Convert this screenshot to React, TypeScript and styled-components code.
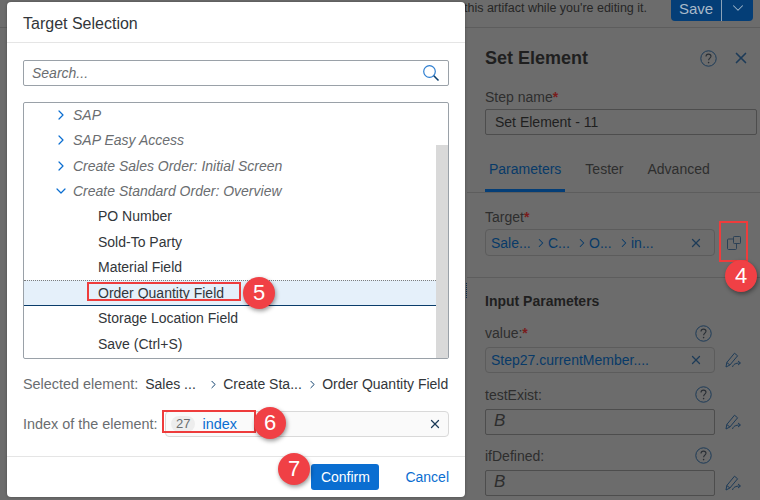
import React from 'react';
import styled, { createGlobalStyle } from 'styled-components';
import { ChevronRight, ChevronDown, X } from 'lucide-react';

const GlobalStyle = createGlobalStyle`
  html, body {
    margin: 0;
    padding: 0;
    background: #6c6c6c;
    font-family: "Liberation Sans", Arial, sans-serif;
  }
`;

const ICON_DARK = '#1d3b58';

const SearchIcon = () => (
  <svg width="18" height="18" viewBox="0 0 18 18" fill="none">
    <circle cx="7.5" cy="7.5" r="5.8" stroke="#2f7fd1" strokeWidth="1.2" />
    <path d="M11.8 11.8L16.5 16.5" stroke="#0a3d6b" strokeWidth="1.6" />
  </svg>
);

const HelpIcon = () => (
  <svg width="17" height="17" viewBox="0 0 17 17" fill="none">
    <circle cx="8.5" cy="8.5" r="7.7" stroke={ICON_DARK} strokeWidth="1" />
    <path
      d="M6 6.6C6 5 7.1 4.1 8.5 4.1C10 4.1 11 5 11 6.3C11 8 8.6 8.2 8.6 10.3"
      stroke="#2a2f35"
      strokeWidth="1.1"
    />
    <circle cx="8.6" cy="12.6" r="0.8" fill="#2a2f35" />
  </svg>
);

const CopyIcon = () => (
  <CopyGlyph width="14" height="14" viewBox="0 0 14 14" fill="none" stroke="#2c4156" strokeWidth="1">
    <rect x="6.5" y="0.5" width="7" height="7" rx="0.8" />
    <path d="M6.5 3H1.5C0.9 3 0.5 3.4 0.5 4V12.5C0.5 13.1 0.9 13.5 1.5 13.5H8.5C9.1 13.5 9.5 13.1 9.5 12.5V7.5" />
  </CopyGlyph>
);

const EditIcon = () => (
  <svg width="16" height="16" viewBox="0 0 16 16" fill="none" stroke="#1d3b58" strokeWidth="1">
    <path d="M1 15L1.8 10.5L9.5 1.2L12.6 3.8L4.9 13Z" />
    <path d="M1.8 10.5L4.9 13" />
    <path d="M7.5 15C8.2 12.4 10.5 11 15 11M13 9L15.5 11L13 13" />
  </svg>
);

const ClearIcon = () => <X size={14} color={ICON_DARK} strokeWidth={2.2} />;

const treeRows = [
  { label: 'SAP', kind: 'closed' },
  { label: 'SAP Easy Access', kind: 'closed' },
  { label: 'Create Sales Order: Initial Screen', kind: 'closed' },
  { label: 'Create Standard Order: Overview', kind: 'open' },
  { label: 'PO Number', kind: 'leaf' },
  { label: 'Sold-To Party', kind: 'leaf' },
  { label: 'Material Field', kind: 'leaf' },
  { label: 'Order Quantity Field', kind: 'selected' },
  { label: 'Storage Location Field', kind: 'leaf' },
  { label: 'Save (Ctrl+S)', kind: 'leaf' },
];

const App = () => {
  return (
    <Page>
      <GlobalStyle />
      <TopBar>
        <Notice>this artifact while you're editing it.</Notice>
        <SaveGroup>
          <SaveButton>Save</SaveButton>
          <SaveArrow>
            <ChevronDown size={18} color="#9db4c8" strokeWidth={1.4} />
          </SaveArrow>
        </SaveGroup>
      </TopBar>

      <Main>
        <SidePanel>
          <TitleRow>
            <PanelTitle>Set Element</PanelTitle>
            <HelpIcon />
            <X size={18} color={ICON_DARK} strokeWidth={2.2} />
          </TitleRow>
          <FieldLabel>
            Step name<Star>*</Star>
          </FieldLabel>
          <StepInput>Set Element - 11</StepInput>
          <Tabs>
            <Tab $active>Parameters</Tab>
            <Tab>Tester</Tab>
            <Tab>Advanced</Tab>
          </Tabs>
          <TargetBlock>
            <FieldLabel>
              Target<Star>*</Star>
            </FieldLabel>
            <FieldRow>
              <TokenField $tall>
                <TokenPath>
                  <TokenPart $width={43}>Sale...</TokenPart>
                  <ChevronRight size={14} color="#083a68" strokeWidth={1.8} />
                  <TokenPart $width={27}>C...</TokenPart>
                  <ChevronRight size={14} color="#083a68" strokeWidth={1.8} />
                  <TokenPart $width={28}>O...</TokenPart>
                  <ChevronRight size={14} color="#083a68" strokeWidth={1.8} />
                  <TokenPart>in...</TokenPart>
                </TokenPath>
                <ClearIcon />
              </TokenField>
              <SideIcon>
                <CopyIcon />
              </SideIcon>
            </FieldRow>
          </TargetBlock>
          <Parameters>
            <SectionTitle>Input Parameters</SectionTitle>
            <ParamHead>
              <FieldLabelInline>
                value:<Star>*</Star>
              </FieldLabelInline>
              <HelpIcon />
            </ParamHead>
            <FieldRow>
              <TokenField>
                <TokenPart>Step27.currentMember....</TokenPart>
                <ClearIcon />
              </TokenField>
              <SideIcon>
                <EditIcon />
              </SideIcon>
            </FieldRow>
            <ParamHead>
              <FieldLabelInline>testExist:</FieldLabelInline>
              <HelpIcon />
            </ParamHead>
            <FieldRow>
              <BoolField>B</BoolField>
              <SideIcon>
                <EditIcon />
              </SideIcon>
            </FieldRow>
            <ParamHead>
              <FieldLabelInline>ifDefined:</FieldLabelInline>
              <HelpIcon />
            </ParamHead>
            <FieldRow>
              <BoolField>B</BoolField>
              <SideIcon>
                <EditIcon />
              </SideIcon>
            </FieldRow>
          </Parameters>
        </SidePanel>
      </Main>

      <Grip />

      <Dialog>
        <DialogHeader>Target Selection</DialogHeader>
        <DialogBody>
          <SearchBox>
            <SearchText>Search...</SearchText>
            <SearchIcon />
          </SearchBox>
          <Tree>
            <TreeList>
              {treeRows.map((row) => (
                <TreeRow key={row.label} $selected={row.kind === 'selected'}>
                  {row.kind === 'closed' && <ChevronRight size={16} color="#0a6ed1" strokeWidth={1.8} />}
                  {row.kind === 'open' && <ChevronDown size={16} color="#0a6ed1" strokeWidth={1.8} />}
                  <TreeLabel $group={row.kind === 'closed' || row.kind === 'open'}>{row.label}</TreeLabel>
                </TreeRow>
              ))}
            </TreeList>
            <ScrollTrack>
              <ScrollThumb />
            </ScrollTrack>
          </Tree>
          <PathRow>
            <MutedLabel>Selected element:</MutedLabel>
            <PathText $width={62}>Sales ...</PathText>
            <ChevronRight size={13} color="#0a3d6b" strokeWidth={1.8} />
            <PathText $width={83}>Create Sta...</PathText>
            <ChevronRight size={13} color="#0a3d6b" strokeWidth={1.8} />
            <PathText>Order Quantity Field</PathText>
          </PathRow>
          <IndexRow>
            <MutedLabel>Index of the element:</MutedLabel>
            <IndexField>
              <IndexTag>
                <IndexNum>27</IndexNum>
                <IndexName>index</IndexName>
              </IndexTag>
              <ClearIcon />
            </IndexField>
          </IndexRow>
        </DialogBody>
        <DialogFooter>
          <ConfirmButton>Confirm</ConfirmButton>
          <CancelButton>Cancel</CancelButton>
        </DialogFooter>
      </Dialog>

      <Callout $x={719} $y={221} $w={29} $h={41} />
      <Callout $x={87} $y={282} $w={154} $h={19} />
      <Callout $x={162} $y={410} $w={94} $h={23} />
      <Badge $cx={741} $cy={276}>4</Badge>
      <Badge $cx={259} $cy={293}>5</Badge>
      <Badge $cx={270} $cy={423}>6</Badge>
      <Badge $cx={294} $cy={469}>7</Badge>
    </Page>
  );
};

export default App;

const Page = styled.div`
  position: relative;
  width: 760px;
  height: 500px;
  overflow: hidden;
  background: #6c6c6c;
  display: flex;
  flex-direction: column;
`;

const TopBar = styled.div`
  height: 27px;
  flex: none;
  display: flex;
  justify-content: flex-end;
  align-items: center;
  gap: 24px;
  border-bottom: 1px solid #5d5d5d;
`;

const Notice = styled.span`
  font-size: 12.5px;
  color: #262626;
  margin-top: -12px;
`;

const SaveGroup = styled.div`
  display: flex;
  height: 27px;
  margin-top: -12px;
  margin-right: 7px;
  border-radius: 4px;
  overflow: hidden;
  background: #043e77;
`;

const SaveButton = styled.div`
  width: 50px;
  font-size: 15px;
  line-height: 27px;
  padding-top: 1px;
  text-align: center;
  color: #a8b9c9;
  border-right: 1px solid #8ba2b8;
`;

const SaveArrow = styled.div`
  width: 31px;
  display: flex;
  align-items: center;
  justify-content: center;
`;

const Main = styled.div`
  flex: 1;
  display: flex;
  justify-content: flex-end;
`;

const SidePanel = styled.div`
  width: 293px;
  box-sizing: border-box;
  padding: 18px 3px 0 18px;
  display: flex;
  flex-direction: column;
`;

const TitleRow = styled.div`
  display: flex;
  align-items: center;
  height: 24px;
  padding-right: 7px;
  gap: 15px;
  margin-bottom: 19px;
`;

const PanelTitle = styled.div`
  flex: 1;
  font-size: 18px;
  font-weight: 700;
  color: #1f1f1f;
`;

const Star = styled.span`
  color: #7a1c1c;
  font-weight: 700;
`;

const FieldLabel = styled.div`
  font-size: 14px;
  line-height: 16px;
  color: #2e2e2e;
  margin-bottom: 4px;
`;

const FieldLabelInline = styled.div`
  font-size: 14px;
  color: #2e2e2e;
`;

const StepInput = styled.div`
  height: 26px;
  box-sizing: border-box;
  border: 1px solid #4d4d4d;
  border-radius: 2px;
  padding: 0 9px;
  font-size: 14px;
  line-height: 24px;
  color: #1f1f1f;
`;

const Tabs = styled.div`
  margin: 18px -3px 0 -18px;
  padding-left: 18px;
  height: 39px;
  display: flex;
  gap: 16px;
  border-bottom: 1px solid #5d5d5d;
`;

const Tab = styled.div<{ $active?: boolean }>`
  font-size: 14px;
  line-height: 33px;
  padding: 0 4px;
  height: 36px;
  color: ${(p) => (p.$active ? '#083a68' : '#2e2e2e')};
  border-bottom: ${(p) => (p.$active ? '3px solid #043e77' : 'none')};
`;

const TargetBlock = styled.div`
  margin: 0 -3px 0 -18px;
  padding: 16px 3px 21px 18px;
  border-bottom: 1px solid #5d5d5d;
`;

const FieldRow = styled.div`
  display: flex;
  align-items: center;
`;

const TokenField = styled.div<{ $tall?: boolean }>`
  width: 232px;
  height: ${(p) => (p.$tall ? '27px' : '26px')};
  box-sizing: border-box;
  border: 1px solid #5c5c5c;
  border-radius: 4px;
  padding: 0 11px 0 5px;
  display: flex;
  align-items: center;
  justify-content: space-between;
`;

const TokenPath = styled.div`
  display: flex;
  align-items: center;
`;

const TokenPart = styled.span<{ $width?: number }>`
  font-size: 14px;
  color: #083a68;
  white-space: nowrap;
  width: ${(p) => (p.$width ? `${p.$width}px` : 'auto')};
`;

const BoolField = styled.div`
  width: 232px;
  height: 26px;
  box-sizing: border-box;
  border: 1px solid #4d4d4d;
  border-radius: 2px;
  padding: 0 8px;
  font-size: 17px;
  line-height: 22px;
  font-style: italic;
  color: #2e2e2e;
`;

const SideIcon = styled.div`
  width: 32px;
  margin-left: 10px;
  display: flex;
  align-items: center;
`;

const CopyGlyph = styled.svg`
  margin: 1px 0 0 2px;
`;

const Parameters = styled.div`
  padding-top: 15px;
`;

const SectionTitle = styled.div`
  font-size: 14px;
  font-weight: 700;
  color: #1f1f1f;
  line-height: 17px;
  margin-bottom: 13.3px;
`;

const ParamHead = styled.div`
  width: 227px;
  display: flex;
  justify-content: space-between;
  align-items: center;
  height: 20px;
  margin: 11.3px 0 4px;
`;

const Grip = styled.div`
  position: absolute;
  left: 466px;
  top: 283px;
  height: 15px;
  border-left: 1px dotted #0b2b4a;
`;

const Dialog = styled.div`
  position: absolute;
  left: 7px;
  top: 2px;
  width: 458px;
  height: 495px;
  background: #fff;
  border-radius: 4px;
  display: flex;
  flex-direction: column;
  box-shadow: 0 0 3px rgba(0, 0, 0, 0.3);
`;

const DialogHeader = styled.div`
  height: 41px;
  flex: none;
  box-sizing: border-box;
  padding: 0 16px;
  font-size: 16px;
  line-height: 43px;
  color: #32363a;
  border-bottom: 1px solid #e5e5e5;
`;

const DialogBody = styled.div`
  flex: 1;
  padding: 17px 16px 0;
  display: flex;
  flex-direction: column;
`;

const SearchBox = styled.div`
  height: 26px;
  box-sizing: border-box;
  border: 1px solid #9aa1a8;
  border-radius: 2px;
  padding: 0 8px;
  display: flex;
  align-items: center;
  justify-content: space-between;
`;

const SearchText = styled.span`
  font-size: 14px;
  font-style: italic;
  color: #6a6d70;
`;

const Tree = styled.div`
  margin-top: 16px;
  height: 257px;
  box-sizing: border-box;
  border: 1px solid #9aa1a8;
  border-radius: 2px;
  display: flex;
  overflow: hidden;
`;

const TreeList = styled.div`
  flex: 1;
  margin-top: -1px;
`;

const TreeRow = styled.div<{ $selected?: boolean }>`
  height: 25.45px;
  box-sizing: border-box;
  display: flex;
  align-items: center;
  padding-left: 29px;
  background: ${(p) => (p.$selected ? '#e5f0fa' : 'transparent')};
  border-top: ${(p) => (p.$selected ? '1px dotted #7d7d7d' : 'none')};
  border-bottom: ${(p) => (p.$selected ? '1px solid #0a3d6b' : 'none')};
`;

const TreeLabel = styled.span<{ $group: boolean }>`
  font-size: 14px;
  margin-left: ${(p) => (p.$group ? '4px' : '45px')};
  font-style: ${(p) => (p.$group ? 'italic' : 'normal')};
  color: ${(p) => (p.$group ? '#6a6d70' : '#32363a')};
`;

const ScrollTrack = styled.div`
  width: 12px;
  flex: none;
  display: flex;
  flex-direction: column;
  justify-content: flex-end;
`;

const ScrollThumb = styled.div`
  height: 213px;
  background: #d9d9d9;
`;

const PathRow = styled.div`
  display: flex;
  align-items: center;
  margin-top: 16px;
  height: 18px;
  font-size: 14px;
  white-space: nowrap;
`;

const MutedLabel = styled.span`
  font-size: 14.4px;
  color: #6a6d70;
  margin-right: 4px;
`;

const PathText = styled.span<{ $width?: number }>`
  color: #32363a;
  width: ${(p) => (p.$width ? `${p.$width}px` : 'auto')};
  margin-left: 3px;
`;

const IndexRow = styled.div`
  display: flex;
  align-items: center;
  margin-top: 18px;
`;

const IndexField = styled.div`
  width: 284px;
  height: 26px;
  box-sizing: border-box;
  margin-left: auto;
  background: #fafafa;
  border: 1px solid #d9d9d9;
  border-radius: 4px;
  padding: 0 6px 0 5px;
  display: flex;
  align-items: center;
  justify-content: space-between;
`;

const IndexTag = styled.div`
  display: flex;
  align-items: center;
  gap: 7px;
`;

const IndexNum = styled.span`
  font-size: 13px;
  line-height: 16px;
  padding: 0 5px;
  border-radius: 8px;
  background: #ededed;
  color: #6a6d70;
`;

const IndexName = styled.span`
  font-size: 14.4px;
  color: #0a6ed1;
`;

const DialogFooter = styled.div`
  height: 40px;
  flex: none;
  border-top: 1px solid #e5e5e5;
  padding-right: 16px;
  display: flex;
  align-items: center;
  justify-content: flex-end;
  gap: 26px;
`;

const ConfirmButton = styled.div`
  width: 68px;
  height: 26px;
  border-radius: 3px;
  background: #0a6ed1;
  color: #fff;
  font-size: 14px;
  line-height: 26px;
  text-align: center;
`;

const CancelButton = styled.div`
  font-size: 14px;
  color: #0a6ed1;
`;

const Callout = styled.div<{ $x: number; $y: number; $w: number; $h: number }>`
  position: absolute;
  left: ${(p) => p.$x}px;
  top: ${(p) => p.$y}px;
  width: ${(p) => p.$w}px;
  height: ${(p) => p.$h}px;
  box-sizing: border-box;
  border: 2px solid #ee3c3c;
`;

const Badge = styled.div<{ $cx: number; $cy: number }>`
  position: absolute;
  left: ${(p) => p.$cx - 16}px;
  top: ${(p) => p.$cy - 16}px;
  width: 32px;
  height: 32px;
  border-radius: 50%;
  background: #f04045;
  color: #fff;
  font-size: 22px;
  line-height: 32px;
  text-align: center;
  box-shadow: 1px 2px 4px rgba(0, 0, 0, 0.4);
`;
